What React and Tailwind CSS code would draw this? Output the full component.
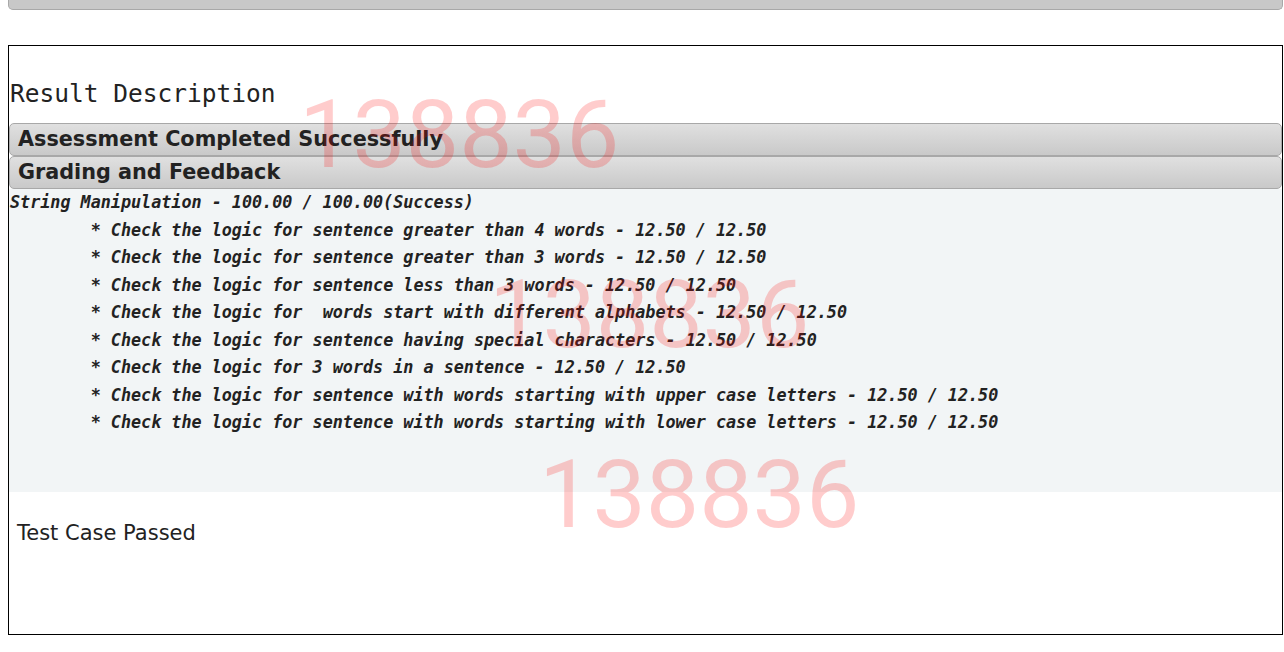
import React from 'react';

const lines = [
  'String Manipulation - 100.00 / 100.00(Success)',
  '\t* Check the logic for sentence greater than 4 words - 12.50 / 12.50',
  '\t* Check the logic for sentence greater than 3 words - 12.50 / 12.50',
  '\t* Check the logic for sentence less than 3 words - 12.50 / 12.50',
  '\t* Check the logic for  words start with different alphabets - 12.50 / 12.50',
  '\t* Check the logic for sentence having special characters - 12.50 / 12.50',
  '\t* Check the logic for 3 words in a sentence - 12.50 / 12.50',
  '\t* Check the logic for sentence with words starting with upper case letters - 12.50 / 12.50',
  '\t* Check the logic for sentence with words starting with lower case letters - 12.50 / 12.50',
];

function Header({ children }) {
  return (
    <div className="h-[33px] rounded-[5px] border border-[#a8a8a8] bg-gradient-to-b from-[#e0e0e0] to-[#c9c9c9] pl-[8px] text-[20.75px] font-bold leading-[31px] text-[#222]">
      {children}
    </div>
  );
}

export default function App() {
  return (
    <div className="relative min-h-[652px] bg-white font-['DejaVu_Sans',sans-serif]">
      <div className="ml-[8px] mr-[1px] h-[10px] rounded-b-[5px] border border-t-0 border-[#a8a8a8] bg-[#c8c8c8]" />

      <div className="ml-[8px] mt-[35px] flex h-[590px] w-[1275px] flex-col border border-black pt-[33px]">
        <h2 className="pl-[1px] font-['DejaVu_Sans_Mono',monospace] text-[24.5px] font-normal leading-[30px] text-[#222]">
          Result Description
        </h2>
        <div className="mt-[14px] flex flex-col">
          <Header>Assessment Completed Successfully</Header>
          <Header>Grading and Feedback</Header>
        </div>
        <pre className="bg-[#f2f5f6] pb-[55px] pl-[1px] font-['DejaVu_Sans_Mono',monospace] text-[16.75px] font-bold italic leading-[27.5px] text-[#222] [tab-size:8]">
          {lines.join('\n')}
        </pre>
        <p className="mt-[27px] pl-[8px] text-[21px] leading-[28px] text-[#222]">Test Case Passed</p>
      </div>

      <div className="pointer-events-none absolute inset-0 font-['Roboto',sans-serif] text-[95px] leading-none text-[rgba(255,0,0,0.2)]">
        <span className="absolute left-[299px] top-[87px]">138836</span>
        <span className="absolute left-[489px] top-[267px]">138836</span>
        <span className="absolute left-[539px] top-[447px]">138836</span>
      </div>
    </div>
  );
}
